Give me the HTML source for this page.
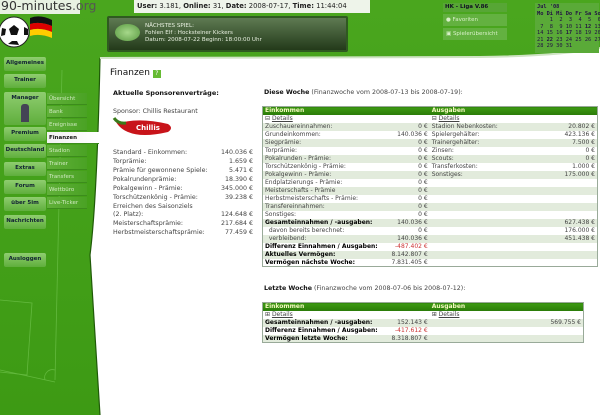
<!DOCTYPE html>
<html><head><meta charset="utf-8"><style>
*{margin:0;padding:0;box-sizing:border-box}
body{width:600px;height:415px;overflow:hidden;position:relative;background:#fff;font-family:"DejaVu Sans","Liberation Sans",sans-serif;color:#333}
.a{position:absolute}
.nb{position:absolute;left:4px;width:42px;height:14px;background:linear-gradient(#8fcd70,#5fae3c);border-radius:2px;font-size:5.5px;font-weight:bold;color:#123;text-align:center;line-height:12px}
.sb{position:absolute;left:47px;width:40px;height:12px;background:linear-gradient(90deg,#61b03a,#4aa224);font-size:5.5px;color:#cfeac0;line-height:12px;padding-left:2px;border-bottom:1px solid #3c8c1c}
table{border-collapse:collapse}
.t{position:absolute;left:262px;width:336px;border:1px solid #9a9;font-size:6px;font-family:"DejaVu Sans",sans-serif}
.t td{height:8px;line-height:7.5px;padding:0 2px;white-space:nowrap;color:#444}
.t tr:nth-child(odd) td{background:#e2ebdc}
.t tr.h td{background:linear-gradient(#3d9a12,#2a7a08);color:#f4f8c0;font-weight:bold;height:8px}
.t td.r{text-align:right}
.t b{color:#000}
.red{color:#c33!important}
.u{text-decoration:underline}
.sp div{position:absolute;font-size:6.3px;color:#444;line-height:8px}
</style></head><body>
<svg class="a" style="left:0;top:0" width="600" height="415">
<defs><linearGradient id="g" x1="0" x2="0" y1="0" y2="1"><stop offset="0" stop-color="#4aa61e"/><stop offset="1" stop-color="#3d9a14"/></linearGradient></defs>
<path d="M0 0H600V48 Q560 56 480 57 L100 58 Q97 200 90 255 Q95 330 100 415 H0Z" fill="url(#g)"/>
<path d="M100 58 Q97 200 90 255 Q95 330 100 415" stroke="#1f5a08" stroke-width="1.2" fill="none"/>
<path d="M100 58 L480 57 Q560 56 600 48" stroke="#cfe3c4" stroke-width="2" fill="none"/>
<g stroke="#6cc048" stroke-width="0.8" fill="none" opacity=".8"><path d="M62 70 L55 380"/><path d="M0 300 L32 303 L27 375 L0 372"/><path d="M0 370 L55 382"/><path d="M45 380 a8 8 0 0 1 10 -10"/></g>
<circle cx="14" cy="32" r="15" fill="#fff" stroke="#222"/>
<path d="M14 25 l5 4 -2 6 h-6 l-2 -6z M2 28 l4 1 -1 6 -4 1z M24 27 l4 2 0 6 -4 0z M8 44 l4 -3 5 0 2 4z" fill="#111"/>
<path d="M30 18 q10 -4 22 2 l0 6 q-12 -5 -22 -2z" fill="#111"/>
<path d="M30 24 q10 -3 22 2 l0 6 q-12 -5 -22 -2z" fill="#d00"/>
<path d="M30 30 q10 -3 22 2 l0 6 q-12 -5 -22 -2z" fill="#fc0"/>
</svg>
<div class="a" style="left:0;top:0;width:80px;height:14px;background:#e8f2e2"></div>
<div class="a" style="left:1px;top:-2px;font-size:12.5px;color:#333;font-family:'DejaVu Sans',sans-serif">90-minutes<span style="color:#555">.org</span></div>
<div class="a" style="left:134px;top:0;width:236px;height:13px;background:#eef4ea;font-size:6.8px;line-height:13px;padding-left:3px;color:#222;white-space:nowrap"><b>User:</b> 3.181, <b>Online:</b> 31, <b>Date:</b> 2008-07-17, <b>Time:</b> 11:44:04</div>
<div class="a" style="left:107px;top:16px;width:241px;height:36px;background:linear-gradient(#5e7a52,#233a1a);border:2px solid #2f5a20;border-radius:2px"></div>
<div class="a" style="left:115px;top:24px;width:25px;height:17px;border-radius:50%;background:radial-gradient(#a6d88a,#5a9a42)"></div>
<div class="a" style="left:145px;top:23px;font-size:5.6px;line-height:7px;color:#e8f0e0;white-space:nowrap">NÄCHSTES SPIEL:<br>Fohlen Elf : Hocksteiner Kickers<br>Datum: 2008-07-22 Beginn: 18:00:00 Uhr</div>
<div class="a" style="left:443px;top:3px;width:64px;height:9px;background:#57a635;font-size:5.5px;font-weight:bold;color:#112;padding-left:2px;line-height:9px">HK - Liga V.86</div>
<div class="a" style="left:443px;top:14px;width:64px;height:12px;background:#63b140;font-size:5.5px;color:#d8f0c8;padding-left:3px;line-height:12px">● Favoriten</div>
<div class="a" style="left:443px;top:28px;width:64px;height:12px;background:#63b140;font-size:5.5px;color:#d8f0c8;padding-left:3px;line-height:12px">▣ Spielerübersicht</div>
<div class="a" style="left:535px;top:3px;width:64px;height:50px;background:#5aaa38;font-size:5.3px;line-height:6.5px;color:#214;padding:1px 2px;white-space:pre;font-family:'DejaVu Sans Mono',monospace"><b>Jul '08</b>
<b>Mo Di Mi Do Fr Sa So</b>
    1  2  3  4  5  6
 7  8  9 10 11 <b>12</b> 13
14 15 16 <b>17</b> 18 19 20
21 <b>22</b> 23 24 25 26 27
28 29 30 31</div>

<div class="nb" style="top:57px">Allgemeines</div>
<div class="nb" style="top:74px">Trainer</div>
<div class="nb" style="top:92px;height:33px">Manager<div style="margin:0 auto;width:8px;height:18px;background:#445;border-radius:3px 3px 0 0"></div></div>
<div class="nb" style="top:127px">Premium</div>
<div class="nb" style="top:144px">Deutschland</div>
<div class="nb" style="top:162px">Extras</div>
<div class="nb" style="top:180px">Forum</div>
<div class="nb" style="top:197px">über 5im</div>
<div class="nb" style="top:215px">Nachrichten</div>
<div class="nb" style="top:253px">Ausloggen</div>
<div class="sb" style="top:93px">Übersicht</div>
<div class="sb" style="top:106px">Bank</div>
<div class="sb" style="top:119px">Ereignisse</div>
<div class="sb" style="top:132px;background:linear-gradient(90deg,#f0f0f0,#fff);color:#111;font-weight:bold;width:52px">Finanzen</div>
<div class="sb" style="top:145px">Stadion</div>
<div class="sb" style="top:158px">Trainer</div>
<div class="sb" style="top:171px">Transfers</div>
<div class="sb" style="top:184px">Wettbüro</div>
<div class="sb" style="top:197px">Live-Ticker</div>

<div class="a" style="left:110px;top:68px;font-size:9px;color:#111">Finanzen <span style="display:inline-block;width:8px;height:8px;background:#6b3;color:#fff;font-size:6px;line-height:8px;text-align:center;vertical-align:0">?</span></div>
<div class="a" style="left:113px;top:89px;font-size:6.5px;font-weight:bold;color:#111">Aktuelle Sponsorenverträge:</div>
<div class="a" style="left:113px;top:108px;font-size:6.3px;color:#444">Sponsor: Chillis Restaurant</div>
<svg class="a" style="left:112px;top:116px" width="62" height="22"><path d="M2 2 Q8 8 12 6 Q30 2 56 8 Q62 12 56 16 Q30 22 16 16 Q6 12 2 2z" fill="#c8141a"/><path d="M2 2 Q6 8 14 7" stroke="#3a7a1a" stroke-width="3" fill="none"/><text x="24" y="14" font-size="7" font-weight="bold" fill="#fff" font-family="DejaVu Sans">Chillis</text></svg>
<div class="sp">
<div style="left:113px;top:149px">Standard - Einkommen:</div><div style="left:200px;top:149px;width:53px;text-align:right">140.036 €</div>
<div style="left:113px;top:158px">Torprämie:</div><div style="left:200px;top:158px;width:53px;text-align:right">1.659 €</div>
<div style="left:113px;top:167px">Prämie für gewonnene Spiele:</div><div style="left:200px;top:167px;width:53px;text-align:right">5.471 €</div>
<div style="left:113px;top:176px">Pokalrundenprämie:</div><div style="left:200px;top:176px;width:53px;text-align:right">18.390 €</div>
<div style="left:113px;top:185px">Pokalgewinn - Prämie:</div><div style="left:200px;top:185px;width:53px;text-align:right">345.000 €</div>
<div style="left:113px;top:194px">Torschützenkönig - Prämie:</div><div style="left:200px;top:194px;width:53px;text-align:right">39.238 €</div>
<div style="left:113px;top:203px">Erreichen des Saisonziels<br>(2. Platz):</div><div style="left:200px;top:211px;width:53px;text-align:right">124.648 €</div>
<div style="left:113px;top:220px">Meisterschaftsprämie:</div><div style="left:200px;top:220px;width:53px;text-align:right">217.684 €</div>
<div style="left:113px;top:229px">Herbstmeisterschaftsprämie:</div><div style="left:200px;top:229px;width:53px;text-align:right">77.459 €</div>
</div>

<div class="a" style="left:264px;top:89px;font-size:6.3px;color:#444;white-space:nowrap"><b style="color:#111">Diese Woche</b> (Finanzwoche vom 2008-07-13 bis 2008-07-19):</div>
<table class="t" style="top:106px">
<tr class="h"><td style="width:110px">Einkommen</td><td style="width:50px"></td><td>Ausgaben</td><td></td></tr>
<tr><td>⊟ <span class="u">Details</span></td><td></td><td>⊟ <span class="u">Details</span></td><td></td></tr>
<tr><td>Zuschauereinnahmen:</td><td class="r">0 €</td><td>Stadion Nebenkosten:</td><td class="r">20.802 €</td></tr>
<tr><td>Grundeinkommen:</td><td class="r">140.036 €</td><td>Spielergehälter:</td><td class="r">423.136 €</td></tr>
<tr><td>Siegprämie:</td><td class="r">0 €</td><td>Trainergehälter:</td><td class="r">7.500 €</td></tr>
<tr><td>Torprämie:</td><td class="r">0 €</td><td>Zinsen:</td><td class="r">0 €</td></tr>
<tr><td>Pokalrunden - Prämie:</td><td class="r">0 €</td><td>Scouts:</td><td class="r">0 €</td></tr>
<tr><td>Torschützenkönig - Prämie:</td><td class="r">0 €</td><td>Transferkosten:</td><td class="r">1.000 €</td></tr>
<tr><td>Pokalgewinn - Prämie:</td><td class="r">0 €</td><td>Sonstiges:</td><td class="r">175.000 €</td></tr>
<tr><td>Endplatzierungs - Prämie:</td><td class="r">0 €</td><td></td><td></td></tr>
<tr><td>Meisterschafts - Prämie</td><td class="r">0 €</td><td></td><td></td></tr>
<tr><td>Herbstmeisterschafts - Prämie:</td><td class="r">0 €</td><td></td><td></td></tr>
<tr><td>Transfereinnahmen:</td><td class="r">0 €</td><td></td><td></td></tr>
<tr><td>Sonstiges:</td><td class="r">0 €</td><td></td><td></td></tr>
<tr><td><b>Gesamteinnahmen / -ausgaben:</b></td><td class="r">140.036 €</td><td></td><td class="r">627.438 €</td></tr>
<tr><td>&nbsp; davon bereits berechnet:</td><td class="r">0 €</td><td></td><td class="r">176.000 €</td></tr>
<tr><td>&nbsp; verbleibend:</td><td class="r">140.036 €</td><td></td><td class="r">451.438 €</td></tr>
<tr><td><b>Differenz Einnahmen / Ausgaben:</b></td><td class="r red">-487.402 €</td><td></td><td></td></tr>
<tr><td><b>Aktuelles Vermögen:</b></td><td class="r">8.142.807 €</td><td></td><td></td></tr>
<tr><td><b>Vermögen nächste Woche:</b></td><td class="r">7.831.405 €</td><td></td><td></td></tr>
</table>

<div class="a" style="left:264px;top:285px;font-size:6.3px;color:#444;white-space:nowrap"><b style="color:#111">Letzte Woche</b> (Finanzwoche vom 2008-07-06 bis 2008-07-12):</div>
<table class="t" style="top:302px;width:322px">
<tr class="h"><td style="width:110px">Einkommen</td><td style="width:50px"></td><td>Ausgaben</td><td></td></tr>
<tr><td>⊞ <span class="u">Details</span></td><td></td><td>⊞ <span class="u">Details</span></td><td></td></tr>
<tr><td><b>Gesamteinnahmen / -ausgaben:</b></td><td class="r">152.143 €</td><td></td><td class="r">569.755 €</td></tr>
<tr><td><b>Differenz Einnahmen / Ausgaben:</b></td><td class="r red">-417.612 €</td><td></td><td></td></tr>
<tr><td><b>Vermögen letzte Woche:</b></td><td class="r">8.318.807 €</td><td></td><td></td></tr>
</table>
</body></html>
